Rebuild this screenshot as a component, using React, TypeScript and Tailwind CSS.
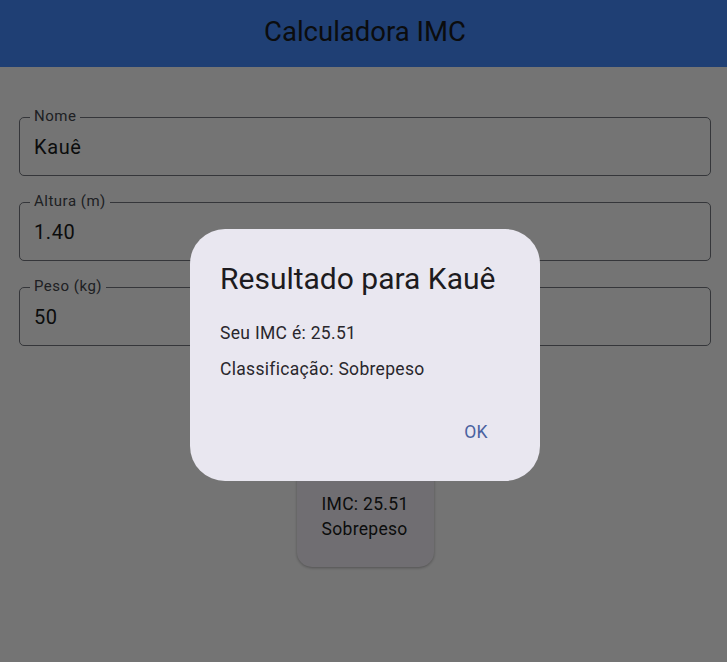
import React from "react"

function OutlinedField({ label, value }: { label: string; value: string }) {
  return (
    <div className="relative flex h-[59px] items-center rounded-[5px] border border-[#74777f] pl-[14px]">
      <span className="absolute -top-[11px] left-[10px] bg-white px-[4px] text-[15px] leading-[18px] tracking-[0.5px] text-[#44474e]">
        {label}
      </span>
      <span className="text-[20px] leading-[28px] tracking-[0.6px] text-[#191c20]">{value}</span>
    </div>
  )
}

export default function App() {
  const fields = [
    { label: "Nome", value: "Kauê" },
    { label: "Altura (m)", value: "1.40" },
    { label: "Peso (kg)", value: "50" },
  ]

  return (
    <div className="relative h-[662px] w-full overflow-hidden bg-white font-['Roboto',sans-serif]">
      <header className="flex h-[67px] items-center justify-center bg-[#448aff] pb-[4px] pl-[3px]">
        <h1 className="text-[27.5px] font-normal leading-[36px] text-[#191c20]">Calculadora IMC</h1>
      </header>

      <main className="flex flex-col pl-[19px] pr-[16px] pt-[50px]">
        <div className="flex flex-col gap-[26px]">
          {fields.map((f) => (
            <OutlinedField key={f.label} label={f.label} value={f.value} />
          ))}
        </div>

        <button className="mx-auto mt-[26px] h-[50px] rounded-full bg-[#f7f2fa] px-[30px] text-[17.5px] text-[#415f91] shadow">
          Calcular
        </button>

        <div className="mx-auto mt-[45px] flex h-[100px] w-[137px] flex-col whitespace-nowrap rounded-[15px] bg-[#f7f2fa] py-[25px] pl-[25px] shadow-[0_1px_3px_rgba(0,0,0,0.3)]">
          <span className="text-[17.5px] leading-[25px] tracking-[0.31px] text-[#191c20]">IMC: 25.51</span>
          <span className="text-[17.5px] leading-[25px] tracking-[0.31px] text-[#191c20]">Sobrepeso</span>
        </div>
      </main>

      {/* modal barrier + dialog */}
      <div className="absolute inset-0 bg-[#0000008b] pl-[190px] pt-[229px]">
        <div className="flex w-[350px] flex-col rounded-[35px] bg-[#e9e7f0] pt-[30px] pb-[24px]">
          <h2 className="px-[30px] text-[30px] font-normal leading-[40px] text-[#1d1b20]">Resultado para Kauê</h2>
          <p className="mt-[22px] px-[30px] text-[17.5px] leading-[25px] tracking-[0.31px] text-[#29272d]">Seu IMC é: 25.51</p>
          <p className="mt-[11px] px-[30px] text-[17.5px] leading-[25px] tracking-[0.31px] text-[#29272d]">Classificação: Sobrepeso</p>
          <div className="mt-[25px] flex justify-end pr-[24px]">
            <button className="h-[50px] min-w-[80px] rounded-full text-[17.5px] font-normal tracking-[0.12px] text-[#4a62a0]">OK</button>
          </div>
        </div>
      </div>
    </div>
  )
}
